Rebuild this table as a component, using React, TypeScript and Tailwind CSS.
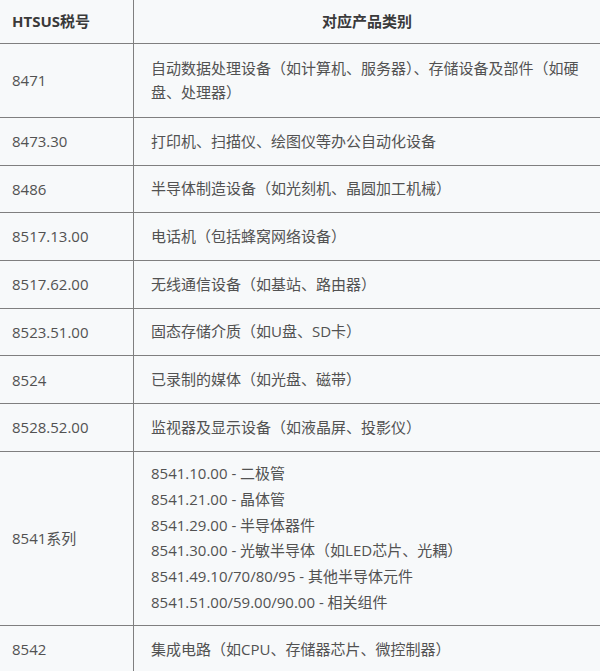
const ROWS: { code: string; desc: string[]; h: string }[] = [
  { code: "8471", desc: ["自动数据处理设备（如计算机、服务器）、存储设备及部件（如硬盘、处理器）"], h: "h-[74px]" },
  { code: "8473.30", desc: ["打印机、扫描仪、绘图仪等办公自动化设备"], h: "h-[47.7px]" },
  { code: "8486", desc: ["半导体制造设备（如光刻机、晶圆加工机械）"], h: "h-[47.7px]" },
  { code: "8517.13.00", desc: ["电话机（包括蜂窝网络设备）"], h: "h-[47.7px]" },
  { code: "8517.62.00", desc: ["无线通信设备（如基站、路由器）"], h: "h-[47.7px]" },
  { code: "8523.51.00", desc: ["固态存储介质（如U盘、SD卡）"], h: "h-[47.7px]" },
  { code: "8524", desc: ["已录制的媒体（如光盘、磁带）"], h: "h-[47.7px]" },
  { code: "8528.52.00", desc: ["监视器及显示设备（如液晶屏、投影仪）"], h: "h-[47.7px]" },
  {
    code: "8541系列",
    desc: [
      "8541.10.00 - 二极管",
      "8541.21.00 - 晶体管",
      "8541.29.00 - 半导体器件",
      "8541.30.00 - 光敏半导体（如LED芯片、光耦）",
      "8541.49.10/70/80/95 - 其他半导体元件",
      "8541.51.00/59.00/90.00 - 相关组件",
    ],
    h: "h-[174px]",
  },
  { code: "8542", desc: ["集成电路（如CPU、存储器芯片、微控制器）"], h: "h-[48px]" },
];

export default function App() {
  return (
    <div
      className="h-[671px] w-[600px] overflow-hidden bg-[#f7f9fa] text-[15px] text-[#525252]"
      style={{ fontFamily: '"Open Sans", "Noto Sans CJK SC", sans-serif' }}
    >
      <div className="flex h-[44px] border-b border-[#7f7f7f] font-bold text-[#3a3a3a]">
        <div className="flex w-[134px] shrink-0 items-center border-r border-[#7f7f7f] pl-[12px]">HTSUS税号</div>
        <div className="flex flex-1 items-center justify-center">对应产品类别</div>
      </div>
      {ROWS.map((r) => (
        <div key={r.code} className={`flex border-b border-[#7f7f7f] ${r.h}`}>
          <div className="flex w-[134px] shrink-0 items-center border-r border-[#7f7f7f] pl-[12px]">{r.code}</div>
          <div className="flex flex-1 flex-col justify-center pl-[17px] pr-[14px]">
            {r.desc.map((d) => (
              <p key={d} className={r.desc.length > 1 ? "leading-[25.8px]" : "leading-[23.5px]"}>{d}</p>
            ))}
          </div>
        </div>
      ))}
    </div>
  );
}
